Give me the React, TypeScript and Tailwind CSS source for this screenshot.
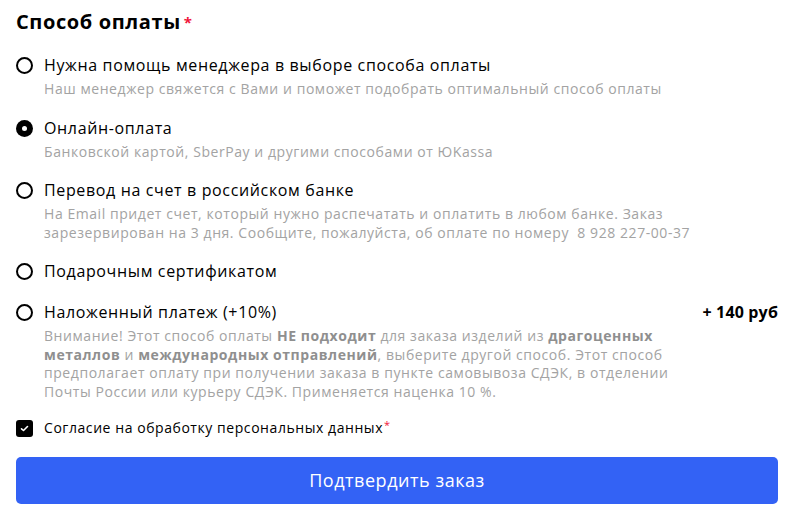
import React from "react";

const font = { fontFamily: '"Open Sans", "Noto Sans", sans-serif' };

function Radio({ checked }: { checked?: boolean }) {
  return checked ? (
    <span className="mt-[4px] flex h-[17px] w-[17px] shrink-0 items-center justify-center rounded-full bg-black">
      <span className="h-[5px] w-[5px] rounded-full bg-white" />
    </span>
  ) : (
    <span className="mt-[4px] block h-[17px] w-[17px] shrink-0 rounded-full border-[2px] border-black" />
  );
}

function Option({
  label,
  checked,
  right,
  children,
}: {
  label: string;
  checked?: boolean;
  right?: string;
  children?: React.ReactNode;
}) {
  return (
    <div className="flex items-start gap-[11px]">
      <Radio checked={checked} />
      <div className="flex-1">
        <div className="flex items-start justify-between">
          <span className="text-[16px] leading-[24px] tracking-[0.04em] text-black">{label}</span>
          {right && (
            <span className="text-[16px] font-bold leading-[24px] tracking-[0.01em] text-black">{right}</span>
          )}
        </div>
        {children && (
          <div className="mt-[3px] text-[14px] leading-[18.5px] tracking-[0.04em] text-[#a3a3a3]">{children}</div>
        )}
      </div>
    </div>
  );
}

export default function App() {
  return (
    <div className="min-h-[516px] w-[794px] bg-white px-[16px] pt-[8px]" style={font}>
      <div className="flex flex-col gap-[17px]">
        <h2 className="text-[20px] font-bold leading-[28px] tracking-[0.03em] text-black">
          Способ оплаты<span className="ml-[3px] align-top text-[15px] text-[#f0153a]">*</span>
        </h2>
        <Option label="Нужна помощь менеджера в выборе способа оплаты">
          Наш менеджер свяжется с Вами и поможет подобрать оптимальный способ оплаты
        </Option>
        <Option label="Онлайн-оплата" checked>
          Банковской картой, SberPay и другими способами от ЮKassa
        </Option>
        <Option label="Перевод на счет в российском банке">
          На Email придет счет, который нужно распечатать и оплатить в любом банке. Заказ
          <br />
          зарезервирован на 3 дня. Сообщите, пожалуйста, об оплате по номеру&nbsp; 8 928 227-00-37
        </Option>
        <Option label="Подарочным сертификатом" />
        <Option label="Наложенный платеж (+10%)" right="+ 140 руб">
          Внимание! Этот способ оплаты <b className="font-bold text-[#8f8f8f]">НЕ подходит</b> для
          заказа изделий из <b className="font-bold text-[#8f8f8f]">драгоценных</b>
          <br />
          <b className="font-bold text-[#8f8f8f]">металлов</b> и{" "}
          <b className="font-bold text-[#8f8f8f]">международных отправлений</b>, выберите другой
          способ. Этот способ
          <br />
          предполагает оплату при получении заказа в пункте самовывоза СДЭК, в отделении
          <br />
          Почты России или курьеру СДЭК. Применяется наценка 10 %.
        </Option>
        <div className="-mt-[2px] flex items-center gap-[11px]">
          <span className="flex h-[17px] w-[17px] shrink-0 items-center justify-center rounded-[3px] bg-black">
            <svg width="9" height="7" viewBox="0 0 9 7">
              <path d="M1.5 3.8 L3.5 5.5 L7.5 1.5" stroke="white" strokeWidth="1.6" fill="none" strokeLinecap="round" strokeLinejoin="round" />
            </svg>
          </span>
          <span className="text-[14px] leading-[24px] tracking-[0.04em] text-black">
            Согласие на обработку персональных данных
            <span className="ml-[1px] align-top text-[11px] leading-[18px] text-[#f0153a]">*</span>
          </span>
        </div>
        <button className="flex h-[47px] w-full items-center justify-center rounded-[5px] bg-[#3362f5] text-[18px] tracking-[0.03em] text-white">
          Подтвердить заказ
        </button>
      </div>
    </div>
  );
}
